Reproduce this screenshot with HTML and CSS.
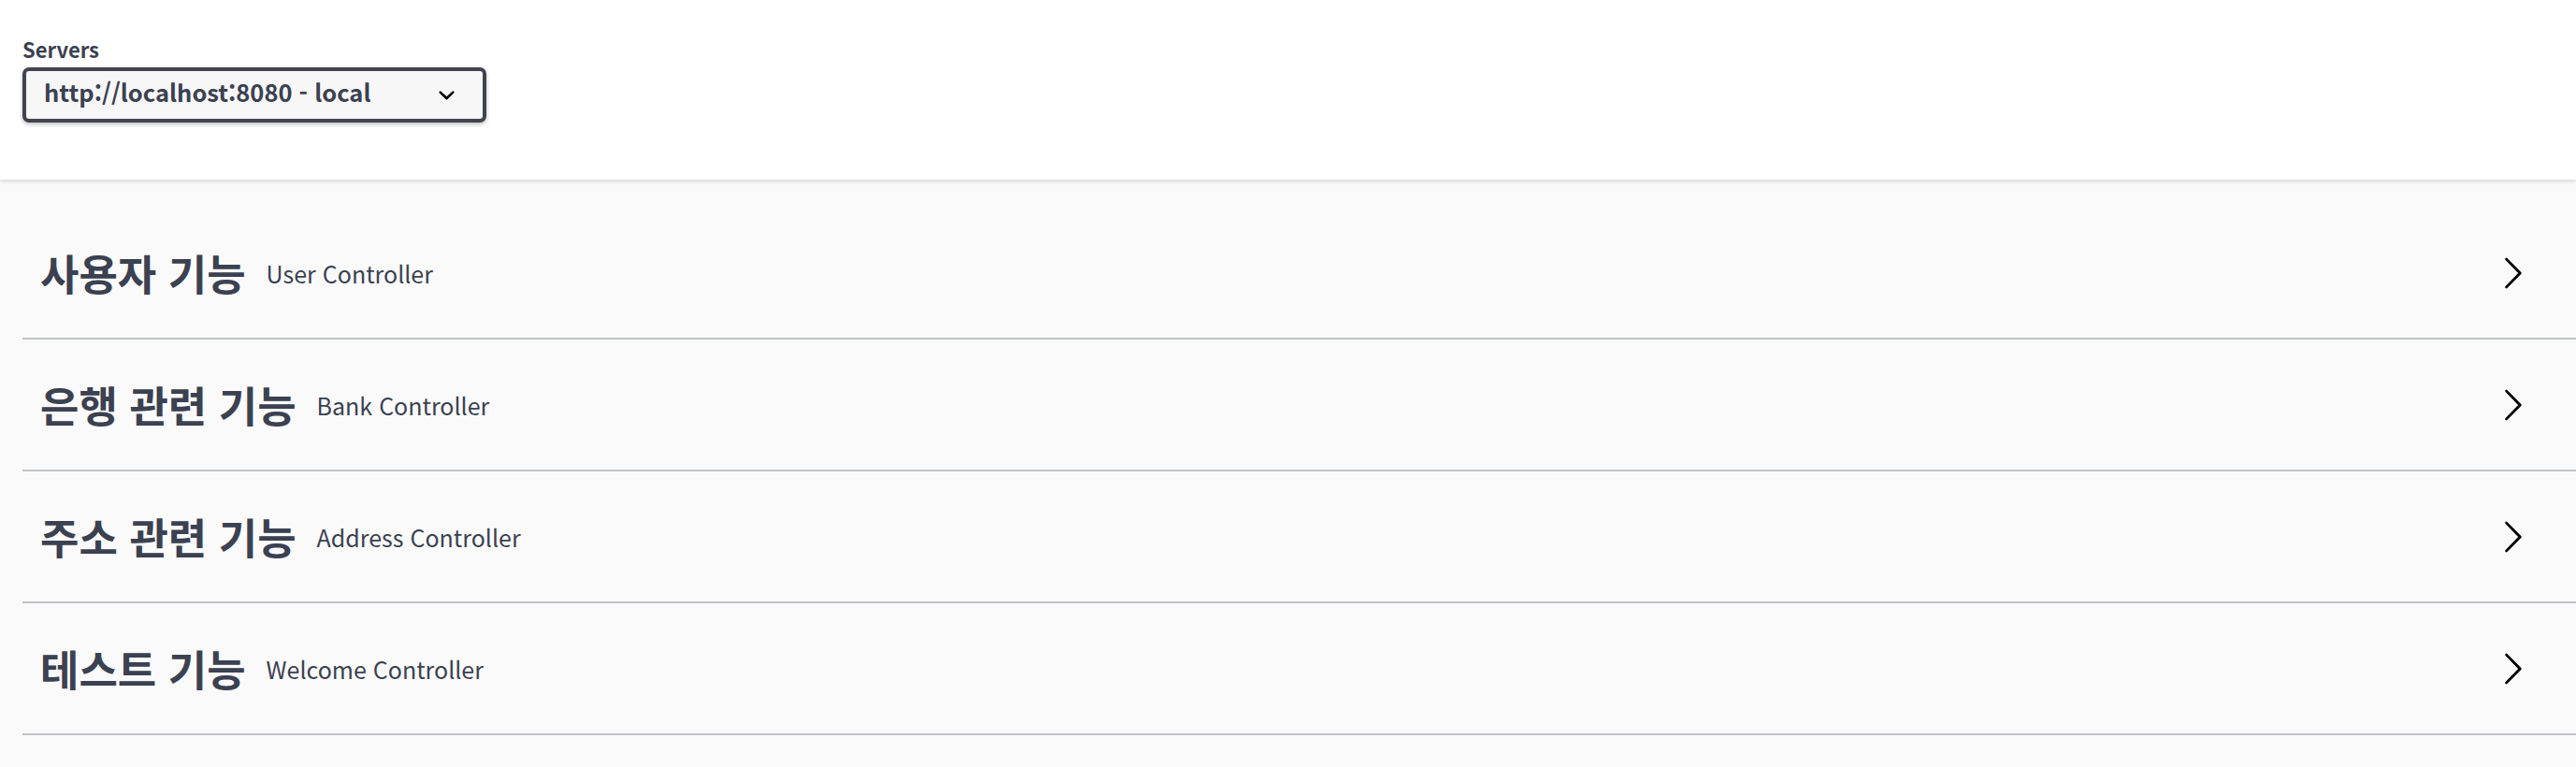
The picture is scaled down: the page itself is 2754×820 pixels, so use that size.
FILE: index.html
```html
<!DOCTYPE html>
<html lang="ko">
<head>
	<meta charset="UTF-8">
	<title>Swagger UI</title>
	<link rel="stylesheet" href="styles.css">
</head>
<body>
	<div class="scheme-container">
		<label class="servers-title">Servers</label>
		<div class="servers-select">
			<span class="servers-value">http://localhost:8080 - local</span>
			<svg class="select-arrow" viewBox="0 0 20 20" width="35" height="35">
				<path d="M13.418 7.859a.695.695 0 01.978 0 .68.68 0 010 .969l-3.908 3.83a.697.697 0 01-.979 0l-3.908-3.830a.68.68 0 010-.969.695.695 0 01.978 0L10 11l3.418-3.141z"/>
			</svg>
		</div>
	</div>

	<div class="tags">
		<div class="tag-row">
			<h3 class="tag-name">사용자 기능</h3>
			<small class="tag-desc">User Controller</small>
			<svg class="tag-arrow" viewBox="0 0 20 20" width="38" height="38">
				<path d="M13.25 10L6.109 2.58a.697.697 0 010-.979.68.68 0 01.969 0l7.83 7.908a.697.697 0 010 .979l-7.83 7.908a.68.68 0 01-.969 0 .697.697 0 010-.979L13.25 10z"/>
			</svg>
		</div>
		<div class="tag-row">
			<h3 class="tag-name">은행 관련 기능</h3>
			<small class="tag-desc">Bank Controller</small>
			<svg class="tag-arrow" viewBox="0 0 20 20" width="38" height="38">
				<path d="M13.25 10L6.109 2.58a.697.697 0 010-.979.68.68 0 01.969 0l7.83 7.908a.697.697 0 010 .979l-7.83 7.908a.68.68 0 01-.969 0 .697.697 0 010-.979L13.25 10z"/>
			</svg>
		</div>
		<div class="tag-row">
			<h3 class="tag-name">주소 관련 기능</h3>
			<small class="tag-desc">Address Controller</small>
			<svg class="tag-arrow" viewBox="0 0 20 20" width="38" height="38">
				<path d="M13.25 10L6.109 2.58a.697.697 0 010-.979.68.68 0 01.969 0l7.83 7.908a.697.697 0 010 .979l-7.83 7.908a.68.68 0 01-.969 0 .697.697 0 010-.979L13.25 10z"/>
			</svg>
		</div>
		<div class="tag-row">
			<h3 class="tag-name">테스트 기능</h3>
			<small class="tag-desc">Welcome Controller</small>
			<svg class="tag-arrow" viewBox="0 0 20 20" width="38" height="38">
				<path d="M13.25 10L6.109 2.58a.697.697 0 010-.979.68.68 0 01.969 0l7.83 7.908a.697.697 0 010 .979l-7.83 7.908a.68.68 0 01-.969 0 .697.697 0 010-.979L13.25 10z"/>
			</svg>
		</div>
	</div>
</body>
</html>
```

FILE: styles.css
```css
        body {
        	margin: 0;
        	background: #fafafa;
        	color: #3b4151;
        	font-family: "Noto Sans CJK KR", "Noto Sans", sans-serif;
        }
        .scheme-container {
        	position: relative;
        	z-index: 1;
        	height: 192px;
        	box-sizing: border-box;
        	padding: 38px 0 0 24px;
        	background: #fff;
        	box-shadow: 0 2px 4px 0 rgba(0,0,0,.15);
        }
        .servers-title {
        	display: block;
        	font-size: 22px;
        	line-height: 28px;
        	font-weight: 700;
        }
        .servers-select {
        	display: flex;
        	align-items: center;
        	justify-content: space-between;
        	margin-top: 6px;
        	width: 496px;
        	height: 59px;
        	box-sizing: border-box;
        	padding: 0 21px 8px 19px;
        	border: 4px solid #41444e;
        	border-radius: 7px;
        	background: #f7f7f7;
        	box-shadow: 0 2px 4px 0 rgba(0,0,0,.25);
        }
        .servers-value {
        	font-size: 25.5px;
        	font-weight: 700;
        }
        .select-arrow {
        	margin-top: 8px;
        	fill: #000;
        }
        .tags {
        	padding: 30px 0 0 24px;
        }
        .tag-row {
        	display: flex;
        	align-items: center;
        	height: 141px;
        	box-sizing: border-box;
        	padding: 0 49px 0 19px;
        	border-bottom: 2px solid rgba(59,65,81,.3);
        }
        .tag-name {
        	margin: 0;
        	font-size: 45px;
        	font-weight: 700;
        }
        .tag-desc {
        	flex: 1;
        	padding: 0 19px 0 22px;
        	font-size: 25px;
        	font-weight: 400;
        }
        .tag-arrow {
        	fill: #000;
        }
```
